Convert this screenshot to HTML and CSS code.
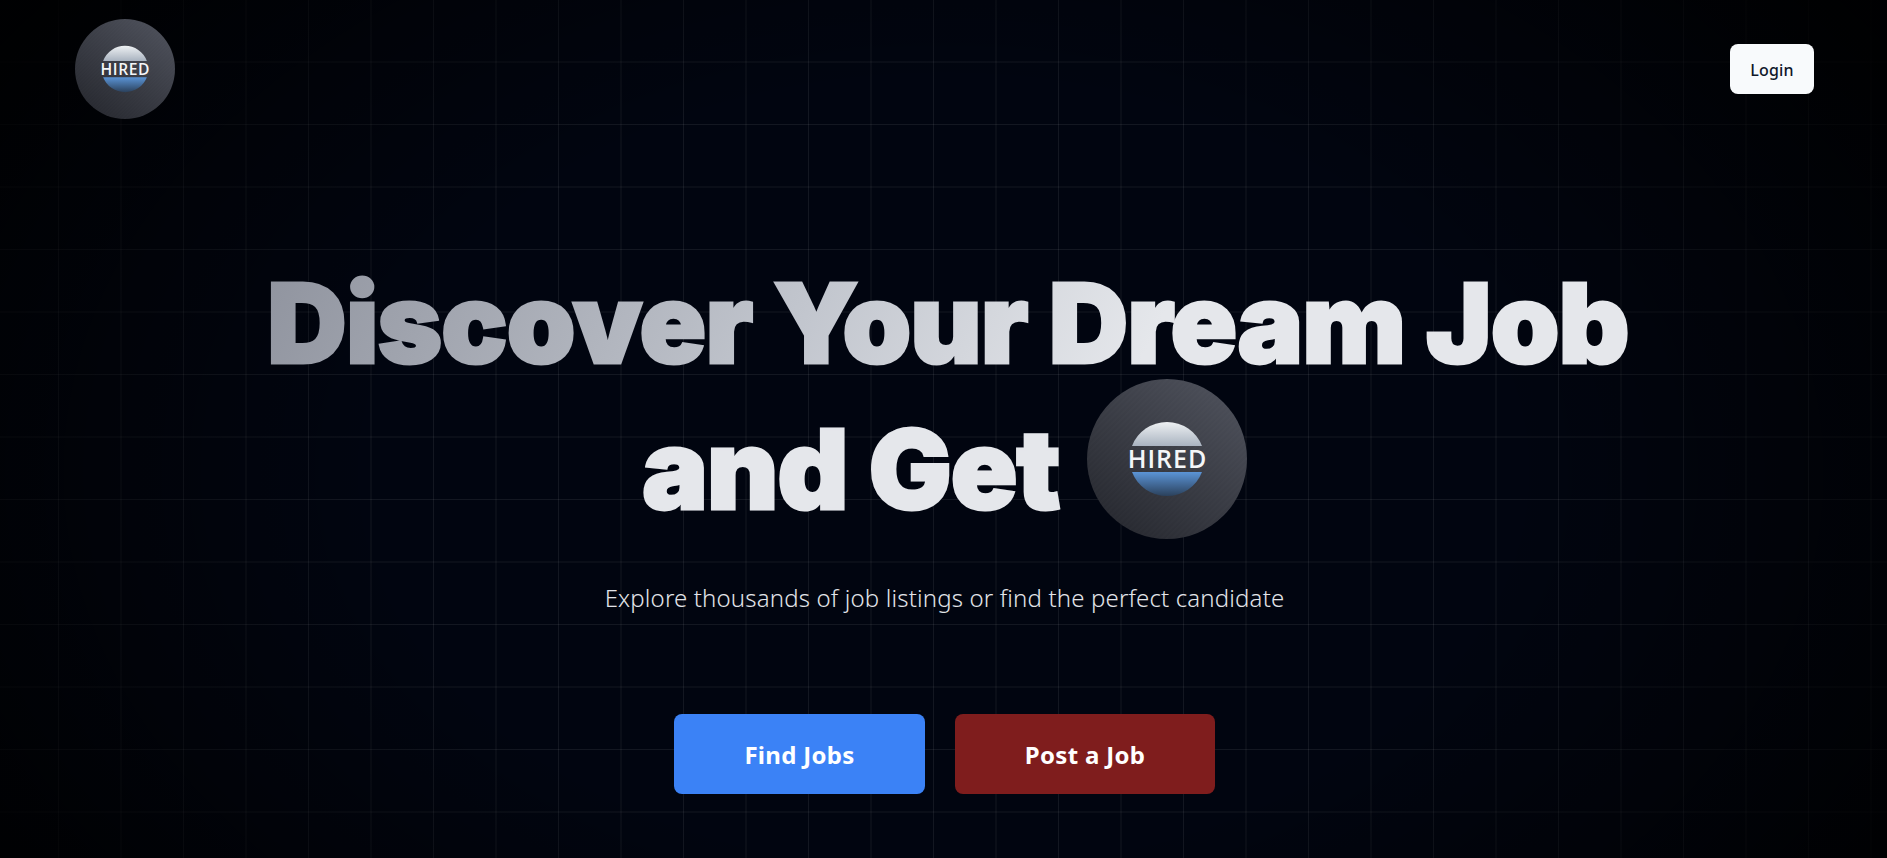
FILE: index.html
```html
<!DOCTYPE html>
<html lang="en">
<head>
<meta charset="utf-8">
<title>Hired</title>
<link rel="stylesheet" href="styles.css">
</head>
<body>
<div class="page">
  <header class="topbar">
    <svg class="logo logo-small" viewBox="0 0 160 160" role="img" aria-label="Hired logo">
      <defs>
        <linearGradient id="discA" x1="0.8" y1="0.1" x2="0.2" y2="0.9"><stop offset="0" stop-color="#4a4d57"/><stop offset="1" stop-color="#292b32"/></linearGradient>
        <linearGradient id="domeA" x1="0" y1="0" x2="0" y2="1"><stop offset="0" stop-color="#eef1f3"/><stop offset="1" stop-color="#a9b3c0"/></linearGradient>
        <linearGradient id="bowlA" x1="0" y1="0" x2="0" y2="1"><stop offset="0" stop-color="#5b94d6"/><stop offset="1" stop-color="#2b415c"/></linearGradient>
        <pattern id="grainA" width="4" height="4" patternUnits="userSpaceOnUse" patternTransform="rotate(45)"><rect width="1.500" height="4" fill="#fff" opacity=".012"/></pattern>
      </defs>
      <circle cx="80" cy="80" r="80" fill="url(#discA)"/>
      <circle cx="80" cy="80" r="80" fill="url(#grainA)"/>
      <path d="M45 67A37.500 37.500 0 0 1 115 67z" fill="url(#domeA)"/>
      <path d="M45 93A37.500 37.500 0 0 0 115 93z" fill="url(#bowlA)"/>
      <text class="logo-word" x="80.500" y="89" text-anchor="middle">HIRED</text>
    </svg>
    <button class="login">Login</button>
  </header>
  <main class="hero">
    <h1 class="headline">
      <span class="line line-one">Discover Your Dream Job</span>
      <span class="line line-two">and Get
        <svg class="logo logo-large" viewBox="0 0 160 160" role="img" aria-label="Hired logo">
          <circle cx="80" cy="80" r="80" fill="url(#discA)"/>
          <circle cx="80" cy="80" r="80" fill="url(#grainA)"/>
          <path d="M45 67A37.500 37.500 0 0 1 115 67z" fill="url(#domeA)"/>
          <path d="M45 93A37.500 37.500 0 0 0 115 93z" fill="url(#bowlA)"/>
          <text class="logo-word" x="80.500" y="89" text-anchor="middle">HIRED</text>
        </svg>
      </span>
    </h1>
    <p class="tagline">Explore thousands of job listings or find the perfect candidate</p>
    <div class="actions">
      <button class="cta cta-blue">Find Jobs</button>
      <button class="cta cta-red">Post a Job</button>
    </div>
  </main>
</div>
</body>
</html>
```
FILE: styles.css
```css
* { box-sizing: border-box; }
html, body { margin: 0; height: 100%; }
body {
  background: #000;
  font-family: "Noto Sans", "Open Sans", sans-serif;
  overflow: hidden;
}
.page {
  height: 858px;
  background-color: #010510;
  background-image:
    radial-gradient(ellipse 60% 90% at 50% 55%, rgba(0,0,0,0) 50%, rgba(0,0,0,.9) 100%),
    linear-gradient(rgba(255,255,255,.07) 1px, transparent 1px),
    linear-gradient(90deg, rgba(255,255,255,.07) 1px, transparent 1px);
  background-size: 100% 100%, 62.5px 62.5px, 62.5px 62.5px;
  background-position: 0 0, 0 -1px, -4.5px 0;
  padding: 19px 73px 0 75px;
}
.topbar {
  display: flex;
  justify-content: space-between;
  align-items: center;
}
.logo { display: block; flex: none; }
.logo-small { width: 100px; height: 100px; }
.logo-large { width: 160px; height: 160px; margin: -10px 0 10px; }
.logo-word {
  font-family: "Open Sans", sans-serif;
  font-size: 25px;
  font-weight: 600;
  letter-spacing: 1px;
  fill: #f4f6f8;
}
.login {
  width: 84px;
  height: 50px;
  padding: 2px 0 0;
  border: 0;
  border-radius: 8px;
  background: #f8fafc;
  color: #0f172a;
  font: 500 16px "Noto Sans", sans-serif;
  letter-spacing: .2px;
}
.hero {
  display: flex;
  flex-direction: column;
  align-items: center;
  margin: 139px -73px 0;
}
.headline {
  margin: 0;
  font-family: Inter, "Noto Sans", sans-serif;
  font-size: 110px;
  font-weight: 900;
  line-height: 131px;
  text-align: center;
  letter-spacing: -0.9px;
  color: #e5e7eb;
  -webkit-text-stroke: 3px currentColor;
}
.line { display: block; }
.line-one {
  padding-left: 7px;
  background: linear-gradient(115deg, #8f939e 0%, #c2c6ce 40%, #e5e7eb 65%);
  -webkit-background-clip: text;
  background-clip: text;
  color: transparent;
}
.line-two {
  display: flex;
  align-items: center;
  justify-content: center;
  gap: 27px;
}
.tagline {
  margin: 33px 0 0;
  color: #e2e4e9;
  font-size: 24px;
  font-weight: 300;
  line-height: 32px;
  letter-spacing: .15px;
}
.actions {
  display: flex;
  gap: 30px;
  margin-top: 100px;
}
.cta {
  height: 80px;
  border: 0;
  border-radius: 8px;
  color: #fff;
  font: 700 24px "Noto Sans", sans-serif;
  letter-spacing: .3px;
}
.cta-blue { width: 251px; background: #3b82f6; }
.cta-red { width: 260px; background: #7f1d1d; }
```
